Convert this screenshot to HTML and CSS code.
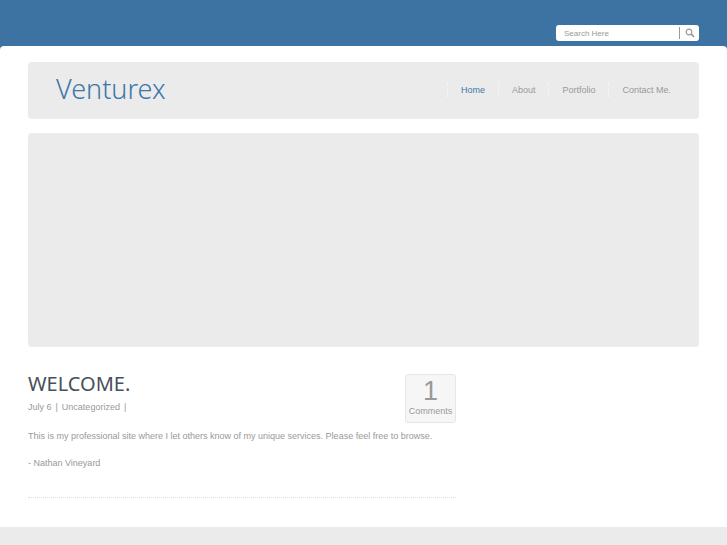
FILE: index.html
```html
<!DOCTYPE html>
<html lang="en">
<head>
<meta charset="utf-8">
<title>Venturex</title>
<link rel="stylesheet" href="styles.css">
</head>
<body>
<div class="topbar">
  <form class="search" role="search">
    <input class="search-input" type="text" aria-label="Search" placeholder="Search Here">
    <button class="search-button" type="submit" aria-label="Search">
      <svg class="search-icon" viewBox="0 0 10 10" aria-hidden="true"><circle cx="4" cy="4" r="2.8"/><path class="handle" d="M6.2 6.2l2.8 2.6"/></svg>
    </button>
  </form>
</div>
<div class="sheet">
  <header class="header">
    <a class="logo" href="#">Venturex</a>
    <nav class="nav">
      <a class="nav-link active" href="#">Home</a>
      <a class="nav-link" href="#">About</a>
      <a class="nav-link" href="#">Portfolio</a>
      <a class="nav-link" href="#">Contact Me.</a>
    </nav>
  </header>
  <div class="banner"></div>
  <main class="content">
    <article class="post">
      <div class="post-head">
        <div>
          <h1 class="title">WELCOME.</h1>
          <p class="meta"><span>July 6</span><span>|</span><span>Uncategorized</span><span>|</span></p>
        </div>
        <a class="comments" href="#"><span class="count">1</span><span>Comments</span></a>
      </div>
      <p class="text">This is my professional site where I let others know of my unique services. Please feel free to browse.</p>
      <p class="text">- Nathan Vineyard</p>
    </article>
  </main>
</div>
<footer class="footer"></footer>
</body>
</html>
```
FILE: styles.css
```css
* {
  box-sizing: border-box;
}

body {
  display: flex;
  flex-direction: column;
  min-height: 100vh;
  margin: 0;
  background: #3d73a3;
  color: #999;
  font: 9px/14px "Liberation Sans", Arial, sans-serif;
}

a {
  color: inherit;
  text-decoration: none;
}

.topbar {
  display: flex;
  justify-content: flex-end;
  padding: 25px 28px 5px;
}

.search {
  display: flex;
  align-items: center;
  width: 143px;
  height: 16px;
  border-radius: 3px;
  background: #fff;
}

.search-input {
  flex: 1;
  min-width: 0;
  height: 12px;
  padding: 1px 8px 0;
  border: 0;
  border-right: 1px solid #999;
  background: none;
  color: #999;
  font: 8px/11px "Liberation Sans", Arial, sans-serif;
}

.search-input::placeholder {
  color: #999;
}

.search-button {
  display: flex;
  align-items: center;
  justify-content: center;
  width: 19px;
  height: 16px;
  padding: 0;
  border: 0;
  background: none;
}

.search-icon {
  width: 10px;
  height: 10px;
  fill: none;
  stroke: #999;
  stroke-width: 1.2;
}

.handle {
  stroke-width: 1.8;
}

.sheet {
  padding: 16px 28px 29px;
  border-radius: 4px 4px 0 0;
  background: #fff;
}

.header {
  display: flex;
  align-items: center;
  justify-content: space-between;
  height: 57px;
  padding: 0 15px 2px 28px;
  border-radius: 4px;
  background: #ebebeb;
}

.logo {
  padding-bottom: 2px;
  color: #3d77aa;
  font: 300 27px/36px "Noto Sans", "Open Sans", sans-serif;
}

.nav {
  display: flex;
}

.nav-link {
  padding: 0 13px;
  border-left: 1px dotted #f8f8f8;
}

.nav-link.active {
  color: #3d77aa;
}

.banner {
  height: 214px;
  margin-top: 14px;
  border-radius: 4px;
  background: #ebebeb;
}

.post {
  max-width: 428px;
  margin-top: 27px;
  padding-bottom: 27px;
  border-bottom: 1px dotted #ddd;
}

.post-head {
  display: flex;
  align-items: flex-start;
  justify-content: space-between;
}

.title {
  margin: 0;
  color: #465158;
  font: 400 20px/20px "Noto Sans", "Open Sans", sans-serif;
}

.meta {
  display: flex;
  gap: 4px;
  margin: 6px 0 0;
}

.comments {
  display: flex;
  flex-direction: column;
  align-items: center;
  width: 51px;
  height: 49px;
  padding-top: 3px;
  border: 1px solid #e6e6e6;
  border-radius: 3px;
  background: #f6f6f6;
}

.count {
  font-size: 27px;
  line-height: 26px;
}

.text {
  margin: 13px 0 0;
}

.post-head + .text {
  margin-top: 6px;
}

.footer {
  flex: 1;
  background: #ebebeb;
}
```
